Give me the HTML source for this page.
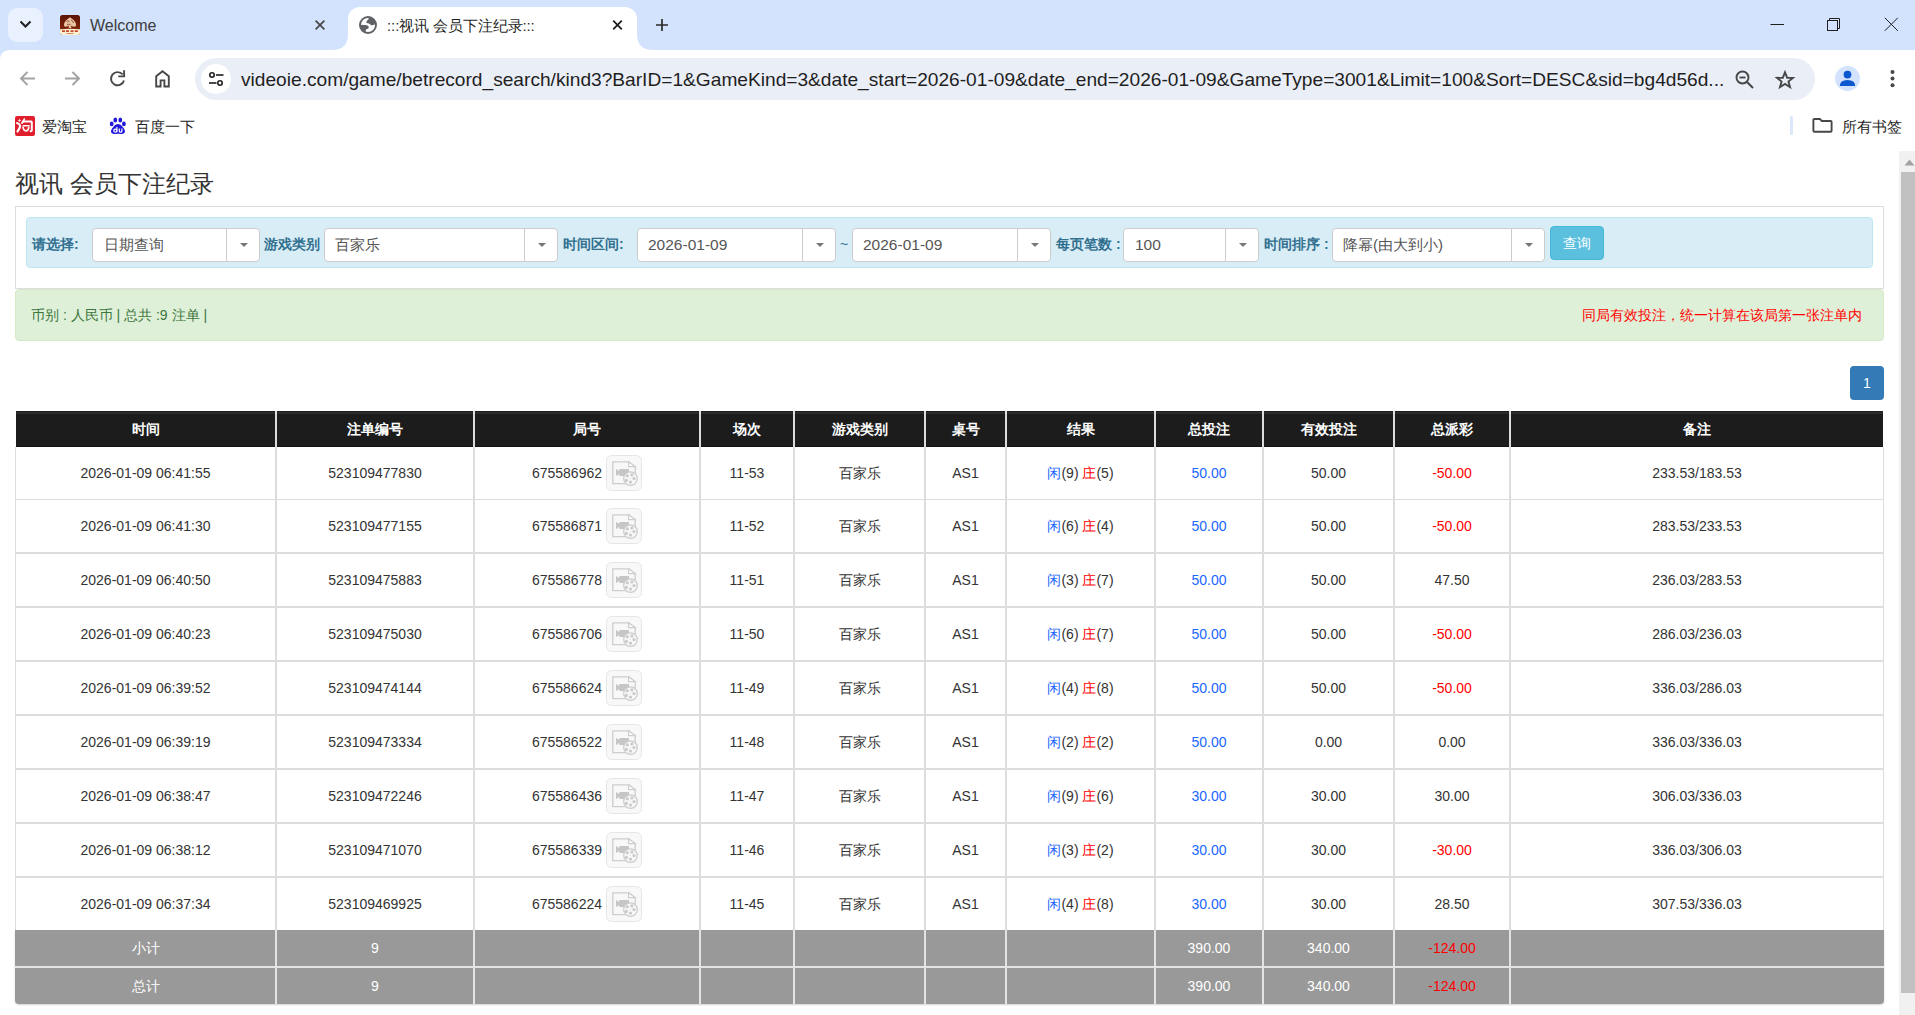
<!DOCTYPE html><html><head><meta charset="utf-8"><title>:::视讯 会员下注纪录:::</title><style>
html,body{margin:0;padding:0;}body{width:1915px;height:1015px;overflow:hidden;position:relative;background:#fff;font-family:"Liberation Sans",sans-serif;white-space:nowrap;}
div{box-sizing:border-box;}
</style></head><body>
<div style="position:absolute;left:0px;top:0px;width:1915px;height:50px;background:#d3e3fd"></div>
<div style="position:absolute;left:8px;top:8px;width:35px;height:34px;background:#e9f1fe;border-radius:9px"></div>
<svg style="position:absolute;left:19px;top:20px;" width="13" height="9" viewBox="0 0 13 9"><path d="M1.5 1.5 L6.5 6.5 L11.5 1.5" fill="none" stroke="#1f1f1f" stroke-width="2"/></svg>
<svg style="position:absolute;left:60px;top:15px;" width="20" height="20" viewBox="0 0 20 20"><defs><linearGradient id="fv" x1="0" y1="0" x2="0" y2="1"><stop offset="0" stop-color="#5a1304"/><stop offset="1" stop-color="#8e2c0e"/></linearGradient></defs><rect x="0" y="0" width="20" height="20" rx="2.5" fill="url(#fv)"/><path d="M0 14.2 Q10 13.2 20 14.2 V17.5 Q20 20 17.5 20 H2.5 Q0 20 0 17.5 Z" fill="#fbf0d2"/><path d="M10 2.2 Q15.2 5.5 16 9 Q16.5 12.3 13.2 11.5 Q11.8 11.1 10.9 10.4 L11.4 13 H8.6 L9.1 10.4 Q8.2 11.1 6.8 11.5 Q3.5 12.3 4 9 Q4.8 5.5 10 2.2 Z" fill="#e7c3a2"/><path d="M6.5 6.5 Q8 5 9.5 6.8 M7 9.5 Q9 8.6 10.5 9.8 M11 5 Q13 5.8 13.5 8" fill="none" stroke="#8a3516" stroke-width="0.8"/><path d="M2 16.2 H5 M6 16.2 H9 M10.5 16.2 H13.5 M14.8 16.2 H17.8" stroke="#c44a2a" stroke-width="1.7"/><path d="M6.5 18.5 H13.5" stroke="#d07a55" stroke-width="0.9"/></svg>
<div style="position:absolute;left:90px;top:15px;height:21px;line-height:21px;font-size:16px;color:#3c3c3c;font-weight:normal;white-space:nowrap;">Welcome</div>
<svg style="position:absolute;left:314px;top:19px;" width="12" height="12" viewBox="0 0 12 12"><path d="M1.6 1.6 L10.4 10.4 M10.4 1.6 L1.6 10.4" stroke="#474747" stroke-width="1.7"/></svg>
<div style="position:absolute;left:348px;top:7px;width:289px;height:44px;background:#fff;border-radius:12px 12px 0 0"></div>
<svg style="position:absolute;left:332px;top:34px;" width="16" height="16" viewBox="0 0 16 16"><path d="M0 16 L16 16 L16 0 Q16 16 0 16 Z" fill="#fff"/></svg>
<svg style="position:absolute;left:637px;top:34px;" width="16" height="16" viewBox="0 0 16 16"><path d="M0 0 Q0 16 16 16 L0 16 Z" fill="#fff"/></svg>
<svg style="position:absolute;left:354px;top:12px;" width="28" height="26" viewBox="0 0 28 26"><defs><clipPath id="gc"><circle cx="14" cy="13" r="8.5"/></clipPath></defs><circle cx="14" cy="13" r="8" fill="none" stroke="#5f6368" stroke-width="1.9"/><g clip-path="url(#gc)" fill="#5f6368"><path d="M15.3 3 Q15.2 7.6 13.2 8.6 Q12 9.8 12.6 10.9 Q15.4 11.2 16.4 12.4 Q17.6 14 20.4 12.6 L24 12 L24 2 Z"/><path d="M3 12.7 L11.2 12.9 Q14.8 13.2 14.8 15.4 Q14.7 17.1 12.2 17.3 Q11.3 18.6 11.8 23 L3 23 Z"/></g></svg>
<div style="position:absolute;left:387px;top:16px;height:19px;line-height:19px;font-size:15px;color:#1f1f1f;font-weight:normal;white-space:nowrap;letter-spacing:-0.1px">:::视讯 会员下注纪录:::</div>
<svg style="position:absolute;left:611px;top:19px;" width="13" height="12" viewBox="0 0 13 12"><path d="M2.2 1.7 L10.8 10.3 M10.8 1.7 L2.2 10.3" stroke="#1f1f1f" stroke-width="1.8"/></svg>
<svg style="position:absolute;left:655px;top:18px;" width="14" height="14" viewBox="0 0 14 14"><path d="M7 1 V13 M1 7 H13" stroke="#2b2b2b" stroke-width="1.7"/></svg>
<svg style="position:absolute;left:1770px;top:23px;" width="15" height="3" viewBox="0 0 15 3"><path d="M0.5 1.5 H14" stroke="#1f1f1f" stroke-width="1"/></svg>
<svg style="position:absolute;left:1826px;top:17px;" width="15" height="15" viewBox="0 0 15 15"><rect x="1.5" y="3.5" width="10" height="10" fill="none" stroke="#1f1f1f" stroke-width="1"/><path d="M3.5 3.5 V1.5 H13.5 V11.5 H11.5" fill="none" stroke="#1f1f1f" stroke-width="1"/></svg>
<svg style="position:absolute;left:1884px;top:17px;" width="15" height="15" viewBox="0 0 15 15"><path d="M0.8 0.8 L13.8 13.8 M13.8 0.8 L0.8 13.8" stroke="#1f1f1f" stroke-width="1"/></svg>
<div style="position:absolute;left:0px;top:50px;width:1915px;height:101px;background:#fff"></div>
<svg style="position:absolute;left:0px;top:50px;" width="10" height="10" viewBox="0 0 10 10"><path d="M0 0 H10 Q0 0 0 10 Z" fill="#d3e3fd"/></svg>
<svg style="position:absolute;left:19px;top:70px;" width="17" height="17" viewBox="0 0 17 17"><path d="M16 8.5 H2.5 M8.5 2 L2 8.5 L8.5 15" fill="none" stroke="#a3a3a3" stroke-width="1.9"/></svg>
<svg style="position:absolute;left:64px;top:70px;" width="17" height="17" viewBox="0 0 17 17"><path d="M1 8.5 H14.5 M8.5 2 L15 8.5 L8.5 15" fill="none" stroke="#a3a3a3" stroke-width="1.9"/></svg>
<svg style="position:absolute;left:108px;top:70px;" width="20" height="18" viewBox="0 0 20 18"><path d="M14.66 4.46 A6.6 6.6 0 1 0 15.97 10.4" fill="none" stroke="#474747" stroke-width="1.9"/><path d="M11.2 6.4 H16.1 V1.1" fill="none" stroke="#474747" stroke-width="1.9" stroke-linecap="square"/></svg>
<svg style="position:absolute;left:154px;top:69px;" width="18" height="20" viewBox="0 0 18 20"><path d="M2.2 17.5 V7.2 L8.5 2.3 L14.8 7.2 V17.5 H10.4 V11.4 H6.6 V17.5 Z" fill="none" stroke="#474747" stroke-width="1.9" stroke-linejoin="miter"/></svg>
<div style="position:absolute;left:195px;top:58px;width:1620px;height:42px;background:#eaeef7;border-radius:21px"></div>
<div style="position:absolute;left:201px;top:64px;width:30px;height:30px;border-radius:50%;background:#fff"></div>
<svg style="position:absolute;left:208px;top:72px;" width="18" height="14" viewBox="0 0 18 14"><circle cx="4" cy="3" r="2.2" fill="none" stroke="#1f1f1f" stroke-width="1.6"/><path d="M8 3 H15.5" stroke="#1f1f1f" stroke-width="1.6"/><circle cx="12" cy="11" r="2.2" fill="none" stroke="#1f1f1f" stroke-width="1.6"/><path d="M1 11 H8.5" stroke="#1f1f1f" stroke-width="1.6"/></svg>
<div style="position:absolute;left:241px;top:69px;height:22px;line-height:22px;font-size:19.15px;color:#1f1f1f;font-weight:normal;white-space:nowrap;">videoie.com/game/betrecord_search/kind3?BarID=1&amp;GameKind=3&amp;date_start=2026-01-09&amp;date_end=2026-01-09&amp;GameType=3001&amp;Limit=100&amp;Sort=DESC&amp;sid=bg4d56d...</div>
<svg style="position:absolute;left:1735px;top:70px;" width="20" height="20" viewBox="0 0 20 20"><circle cx="7.5" cy="7.5" r="6" fill="none" stroke="#474747" stroke-width="1.9"/><path d="M4.5 7.5 H10.5" stroke="#474747" stroke-width="1.9"/><path d="M12 12 L18 18" stroke="#474747" stroke-width="2"/></svg>
<svg style="position:absolute;left:1774px;top:69px;" width="22" height="21" viewBox="0 0 22 21"><g transform="translate(11 10.7) scale(0.9) translate(-11 -10.5)"><path d="M11 2.2 L13.4 8.3 L19.8 8.5 L14.8 12.5 L16.6 18.8 L11 15.1 L5.4 18.8 L7.2 12.5 L2.2 8.5 L8.6 8.3 Z" fill="none" stroke="#474747" stroke-width="2.1" stroke-linejoin="miter"/></g></svg>
<div style="position:absolute;left:1835px;top:66px;width:25px;height:25px;border-radius:50%;background:#d3e3fd"></div>
<svg style="position:absolute;left:1839px;top:70px;" width="17" height="17" viewBox="0 0 17 17"><circle cx="8.5" cy="4.6" r="3.9" fill="#0b57d0"/><path d="M0.8 16 Q0.8 10 8.5 10 Q16.2 10 16.2 16 Z" fill="#0b57d0"/></svg>
<svg style="position:absolute;left:1889px;top:69px;" width="7" height="20" viewBox="0 0 7 20"><circle cx="3.5" cy="3" r="2" fill="#474747"/><circle cx="3.5" cy="9.5" r="2" fill="#474747"/><circle cx="3.5" cy="16.2" r="2" fill="#474747"/></svg>
<svg style="position:absolute;left:15px;top:116px;" width="20" height="20" viewBox="0 0 20 20"><rect x="0" y="0" width="20" height="20" rx="2" fill="#df1f2b"/><g fill="none" stroke="#fff" stroke-linecap="round"><path d="M2 7 Q4.2 7.6 4.9 9.2" stroke-width="2"/><path d="M5.2 10 Q4.6 13 2.5 15.5" stroke-width="2.2"/><path d="M9.3 3.2 Q8.6 5.4 6.9 7" stroke-width="1.8"/><path d="M8 5.6 H16.3 Q16.8 5.6 16.8 6.3 V14.2 Q16.8 15.3 15.6 15.3" stroke-width="2"/><path d="M8.3 9.8 H14" stroke-width="1.6"/><path d="M8 11.2 Q8.5 14.8 10.8 15 Q13.5 14.8 13.8 11.4" stroke-width="1.6"/></g><path d="M10.6 12.5 Q9.6 11.4 10 12.8 L10.8 13.8 L11.6 12.8 Q12 11.4 11 12.5 Z" fill="#df1f2b"/><path d="M4.5 2.6 L5 4 L6.4 4.5 L5 5 L4.5 6.4 L4 5 L2.6 4.5 L4 4 Z" fill="#fff"/></svg>
<div style="position:absolute;left:42px;top:118px;height:18px;line-height:18px;font-size:15px;color:#1f1f1f;font-weight:normal;white-space:nowrap;letter-spacing:0px">爱淘宝</div>
<svg style="position:absolute;left:104px;top:112px;" width="28" height="28" viewBox="0 0 28 28"><g fill="#2319dc"><ellipse cx="11.3" cy="8" rx="1.9" ry="2.5"/><ellipse cx="16.3" cy="8" rx="1.9" ry="2.5"/><ellipse cx="7.7" cy="11.9" rx="1.9" ry="2.3"/><ellipse cx="19.9" cy="11.9" rx="1.9" ry="2.3"/><path d="M14 12 Q17 12 19 15.2 Q21.6 18.3 20.8 20.6 Q19.8 22.4 17 22 Q14 21.6 11 22 Q8.2 22.4 7.2 20.6 Q6.4 18.3 9 15.2 Q11 12 14 12 Z"/></g><g fill="none" stroke="#fff" stroke-width="1.2"><circle cx="11.3" cy="18.6" r="1.5"/><path d="M12.9 15 V20.3"/><path d="M15.3 16.6 V18.9 Q15.3 20.2 16.6 20.2 Q17.9 20.2 17.9 18.9 V16.6"/></g></svg>
<div style="position:absolute;left:135px;top:118px;height:18px;line-height:18px;font-size:15px;color:#1f1f1f;font-weight:normal;white-space:nowrap;">百度一下</div>
<div style="position:absolute;left:1790px;top:116px;width:3px;height:19px;background:#dbe7fb;border-radius:1.5px"></div>
<svg style="position:absolute;left:1812px;top:117px;" width="22" height="17" viewBox="0 0 22 17"><path d="M1.4 2.9 Q1.4 1.95 2.4 1.95 H7.8 L9.8 4 H18.6 Q19.6 4 19.6 5 V13.8 Q19.6 14.75 18.6 14.75 H2.4 Q1.4 14.75 1.4 13.8 Z" fill="none" stroke="#474747" stroke-width="1.9"/></svg>
<div style="position:absolute;left:1842px;top:118px;height:18px;line-height:18px;font-size:15px;color:#1f1f1f;font-weight:normal;white-space:nowrap;">所有书签</div>
<div style="position:absolute;left:1899px;top:151px;width:16px;height:864px;background:#f1f1f1"></div>
<svg style="position:absolute;left:1904px;top:159px;" width="11" height="7" viewBox="0 0 11 7"><path d="M0.5 6.5 L5.5 0.5 L10.5 6.5 Z" fill="#a3a3a3"/></svg>
<div style="position:absolute;left:1901px;top:172px;width:14px;height:821px;background:#c1c1c1"></div>
<div style="position:absolute;left:15px;top:169px;height:30px;line-height:30px;font-size:24px;color:#333;font-weight:normal;white-space:nowrap;">视讯 会员下注纪录</div>
<div style="position:absolute;left:15px;top:206px;width:1869px;height:83px;border:1px solid #dddddd;background:#fff"></div>
<div style="position:absolute;left:26px;top:217px;width:1847px;height:51px;background:#d9edf7;border:1px solid #bce8f1;border-radius:4px"></div>
<div style="position:absolute;left:32px;top:235px;height:18px;line-height:18px;font-size:14px;color:#31708f;font-weight:bold;white-space:nowrap;">请选择:</div>
<div style="position:absolute;left:264px;top:235px;height:18px;line-height:18px;font-size:14px;color:#31708f;font-weight:bold;white-space:nowrap;">游戏类别</div>
<div style="position:absolute;left:563px;top:235px;height:18px;line-height:18px;font-size:14px;color:#31708f;font-weight:bold;white-space:nowrap;">时间区间:</div>
<div style="position:absolute;left:840px;top:235px;height:18px;line-height:18px;font-size:14px;color:#31708f;font-weight:normal;white-space:nowrap;">~</div>
<div style="position:absolute;left:1056px;top:235px;height:18px;line-height:18px;font-size:14px;color:#31708f;font-weight:bold;white-space:nowrap;">每页笔数 :</div>
<div style="position:absolute;left:1264px;top:235px;height:18px;line-height:18px;font-size:14px;color:#31708f;font-weight:bold;white-space:nowrap;">时间排序 :</div>
<div style="position:absolute;left:92px;top:228px;width:168px;height:34px;background:#fff;border:1px solid #cccccc;border-radius:4px"></div>
<div style="position:absolute;left:226px;top:229px;width:1px;height:32px;background:#cccccc"></div>
<svg style="position:absolute;left:239.5px;top:243px;" width="8" height="4" viewBox="0 0 8 4"><path d="M0 0 H8 L4 4 Z" fill="#777"/></svg>
<div style="position:absolute;left:104px;top:235px;height:20px;line-height:20px;font-size:15.5px;color:#555;font-weight:normal;white-space:nowrap;font-size:15px">日期查询</div>
<div style="position:absolute;left:324px;top:228px;width:234px;height:34px;background:#fff;border:1px solid #cccccc;border-radius:4px"></div>
<div style="position:absolute;left:524px;top:229px;width:1px;height:32px;background:#cccccc"></div>
<svg style="position:absolute;left:537.5px;top:243px;" width="8" height="4" viewBox="0 0 8 4"><path d="M0 0 H8 L4 4 Z" fill="#777"/></svg>
<div style="position:absolute;left:335px;top:235px;height:20px;line-height:20px;font-size:15.5px;color:#555;font-weight:normal;white-space:nowrap;font-size:15px">百家乐</div>
<div style="position:absolute;left:637px;top:228px;width:199px;height:34px;background:#fff;border:1px solid #cccccc;border-radius:4px"></div>
<div style="position:absolute;left:802px;top:229px;width:1px;height:32px;background:#cccccc"></div>
<svg style="position:absolute;left:815.5px;top:243px;" width="8" height="4" viewBox="0 0 8 4"><path d="M0 0 H8 L4 4 Z" fill="#777"/></svg>
<div style="position:absolute;left:648px;top:235px;height:20px;line-height:20px;font-size:15.5px;color:#555;font-weight:normal;white-space:nowrap;">2026-01-09</div>
<div style="position:absolute;left:852px;top:228px;width:199px;height:34px;background:#fff;border:1px solid #cccccc;border-radius:4px"></div>
<div style="position:absolute;left:1017px;top:229px;width:1px;height:32px;background:#cccccc"></div>
<svg style="position:absolute;left:1030.5px;top:243px;" width="8" height="4" viewBox="0 0 8 4"><path d="M0 0 H8 L4 4 Z" fill="#777"/></svg>
<div style="position:absolute;left:863px;top:235px;height:20px;line-height:20px;font-size:15.5px;color:#555;font-weight:normal;white-space:nowrap;">2026-01-09</div>
<div style="position:absolute;left:1123px;top:228px;width:136px;height:34px;background:#fff;border:1px solid #cccccc;border-radius:4px"></div>
<div style="position:absolute;left:1225px;top:229px;width:1px;height:32px;background:#cccccc"></div>
<svg style="position:absolute;left:1238.5px;top:243px;" width="8" height="4" viewBox="0 0 8 4"><path d="M0 0 H8 L4 4 Z" fill="#777"/></svg>
<div style="position:absolute;left:1135px;top:235px;height:20px;line-height:20px;font-size:15.5px;color:#555;font-weight:normal;white-space:nowrap;">100</div>
<div style="position:absolute;left:1332px;top:228px;width:213px;height:34px;background:#fff;border:1px solid #cccccc;border-radius:4px"></div>
<div style="position:absolute;left:1511px;top:229px;width:1px;height:32px;background:#cccccc"></div>
<svg style="position:absolute;left:1524.5px;top:243px;" width="8" height="4" viewBox="0 0 8 4"><path d="M0 0 H8 L4 4 Z" fill="#777"/></svg>
<div style="position:absolute;left:1343px;top:235px;height:20px;line-height:20px;font-size:15.5px;color:#555;font-weight:normal;white-space:nowrap;font-size:15px">降幂(由大到小)</div>
<div style="position:absolute;left:1550px;top:226px;width:54px;height:34px;background:#5bc0de;border:1px solid #46b8da;border-radius:4px"></div>
<div style="position:absolute;left:977px;top:233px;width:1200px;height:20px;line-height:20px;text-align:center;font-size:14px;color:#fff;font-weight:normal;">查询</div>
<div style="position:absolute;left:15px;top:289px;width:1869px;height:52px;background:#dff0d8;border:1px solid #d6e9c6;border-radius:4px"></div>
<div style="position:absolute;left:31px;top:305px;height:20px;line-height:20px;font-size:14px;color:#3c763d;font-weight:normal;white-space:nowrap;">币别 : 人民币 | 总共 :9 注单 |</div>
<div style="position:absolute;left:662px;top:305px;width:1200px;height:20px;line-height:20px;text-align:right;font-size:14px;color:#ff0000;font-weight:normal;">同局有效投注，统一计算在该局第一张注单内</div>
<div style="position:absolute;left:1850px;top:366px;width:34px;height:34px;background:#337ab7;border-radius:4px"></div>
<div style="position:absolute;left:1267px;top:373px;width:1200px;height:20px;line-height:20px;text-align:center;font-size:14px;color:#fff;font-weight:normal;">1</div>
<div style="position:absolute;left:16px;top:411px;width:1867px;height:36px;background:linear-gradient(#1e1e1e 0px,#1e1e1e 1px,#2b2b2b 1px,#2b2b2b 3px,#1c1c1c 3px,#1c1c1c 35px,#121212 35px)"></div>
<div style="position:absolute;left:-454.5px;top:419px;width:1200px;height:20px;line-height:20px;text-align:center;font-size:14px;color:#fff;font-weight:bold;">时间</div>
<div style="position:absolute;left:-225.0px;top:419px;width:1200px;height:20px;line-height:20px;text-align:center;font-size:14px;color:#fff;font-weight:bold;">注单编号</div>
<div style="position:absolute;left:-13.0px;top:419px;width:1200px;height:20px;line-height:20px;text-align:center;font-size:14px;color:#fff;font-weight:bold;">局号</div>
<div style="position:absolute;left:147.0px;top:419px;width:1200px;height:20px;line-height:20px;text-align:center;font-size:14px;color:#fff;font-weight:bold;">场次</div>
<div style="position:absolute;left:259.5px;top:419px;width:1200px;height:20px;line-height:20px;text-align:center;font-size:14px;color:#fff;font-weight:bold;">游戏类别</div>
<div style="position:absolute;left:365.5px;top:419px;width:1200px;height:20px;line-height:20px;text-align:center;font-size:14px;color:#fff;font-weight:bold;">桌号</div>
<div style="position:absolute;left:480.5px;top:419px;width:1200px;height:20px;line-height:20px;text-align:center;font-size:14px;color:#fff;font-weight:bold;">结果</div>
<div style="position:absolute;left:609.0px;top:419px;width:1200px;height:20px;line-height:20px;text-align:center;font-size:14px;color:#fff;font-weight:bold;">总投注</div>
<div style="position:absolute;left:728.5px;top:419px;width:1200px;height:20px;line-height:20px;text-align:center;font-size:14px;color:#fff;font-weight:bold;">有效投注</div>
<div style="position:absolute;left:852.0px;top:419px;width:1200px;height:20px;line-height:20px;text-align:center;font-size:14px;color:#fff;font-weight:bold;">总派彩</div>
<div style="position:absolute;left:1097.0px;top:419px;width:1200px;height:20px;line-height:20px;text-align:center;font-size:14px;color:#fff;font-weight:bold;">备注</div>
<div style="position:absolute;left:275px;top:411px;width:2px;height:36px;background:#dcdcdc"></div>
<div style="position:absolute;left:473px;top:411px;width:2px;height:36px;background:#dcdcdc"></div>
<div style="position:absolute;left:699px;top:411px;width:2px;height:36px;background:#dcdcdc"></div>
<div style="position:absolute;left:793px;top:411px;width:2px;height:36px;background:#dcdcdc"></div>
<div style="position:absolute;left:924px;top:411px;width:2px;height:36px;background:#dcdcdc"></div>
<div style="position:absolute;left:1005px;top:411px;width:2px;height:36px;background:#dcdcdc"></div>
<div style="position:absolute;left:1154px;top:411px;width:2px;height:36px;background:#dcdcdc"></div>
<div style="position:absolute;left:1262px;top:411px;width:2px;height:36px;background:#dcdcdc"></div>
<div style="position:absolute;left:1393px;top:411px;width:2px;height:36px;background:#dcdcdc"></div>
<div style="position:absolute;left:1509px;top:411px;width:2px;height:36px;background:#dcdcdc"></div>
<div style="position:absolute;left:15px;top:447px;width:1px;height:483px;background:#dddddd"></div>
<div style="position:absolute;left:1883px;top:447px;width:1px;height:483px;background:#dddddd"></div>
<div style="position:absolute;left:275px;top:447px;width:2px;height:483px;background:#dddddd"></div>
<div style="position:absolute;left:473px;top:447px;width:2px;height:483px;background:#dddddd"></div>
<div style="position:absolute;left:699px;top:447px;width:2px;height:483px;background:#dddddd"></div>
<div style="position:absolute;left:793px;top:447px;width:2px;height:483px;background:#dddddd"></div>
<div style="position:absolute;left:924px;top:447px;width:2px;height:483px;background:#dddddd"></div>
<div style="position:absolute;left:1005px;top:447px;width:2px;height:483px;background:#dddddd"></div>
<div style="position:absolute;left:1154px;top:447px;width:2px;height:483px;background:#dddddd"></div>
<div style="position:absolute;left:1262px;top:447px;width:2px;height:483px;background:#dddddd"></div>
<div style="position:absolute;left:1393px;top:447px;width:2px;height:483px;background:#dddddd"></div>
<div style="position:absolute;left:1509px;top:447px;width:2px;height:483px;background:#dddddd"></div>
<div style="position:absolute;left:15px;top:499px;width:1869px;height:1px;background:#dddddd"></div>
<div style="position:absolute;left:15px;top:552px;width:1869px;height:2px;background:#dddddd"></div>
<div style="position:absolute;left:15px;top:606px;width:1869px;height:2px;background:#dddddd"></div>
<div style="position:absolute;left:15px;top:660px;width:1869px;height:2px;background:#dddddd"></div>
<div style="position:absolute;left:15px;top:714px;width:1869px;height:2px;background:#dddddd"></div>
<div style="position:absolute;left:15px;top:768px;width:1869px;height:2px;background:#dddddd"></div>
<div style="position:absolute;left:15px;top:822px;width:1869px;height:2px;background:#dddddd"></div>
<div style="position:absolute;left:15px;top:876px;width:1869px;height:2px;background:#dddddd"></div>
<div style="position:absolute;left:-454.5px;top:463.0px;width:1200px;height:20px;line-height:20px;text-align:center;font-size:14px;color:#333;font-weight:normal;">2026-01-09 06:41:55</div>
<div style="position:absolute;left:-225.0px;top:463.0px;width:1200px;height:20px;line-height:20px;text-align:center;font-size:14px;color:#333;font-weight:normal;">523109477830</div>
<div style="position:absolute;left:-598px;top:463.0px;width:1200px;height:20px;line-height:20px;text-align:right;font-size:14px;color:#333;font-weight:normal;">675586962</div>
<svg style="position:absolute;left:606px;top:455px;" width="36" height="36" viewBox="0 0 36 36"><rect x="0.5" y="0.5" width="35" height="35" rx="5" fill="#f8f8f8" stroke="#e6e6e6"/><path d="M6.8 6.8 H22.6 L29.2 11.8 V28.6 H6.8 Z" fill="#f8f8f8" stroke="#cdcdcd" stroke-width="1.3"/><path d="M22.6 6.8 V11.6 H29.2 Z" fill="#fdfdfd" stroke="#cdcdcd" stroke-width="1.2"/><path d="M10 14 L13.3 16 V14 H23 V21 H13.3 V19 L10 21 Z" fill="#c6c6c6"/><circle cx="24.5" cy="23.6" r="6.8" fill="#f8f8f8" stroke="#cdcdcd" stroke-width="1.3"/><circle cx="21.3" cy="20.8" r="1.6" fill="#cacaca"/><circle cx="25.9" cy="19.9" r="1.6" fill="#cacaca"/><circle cx="28" cy="23.6" r="1.6" fill="#cacaca"/><circle cx="24.5" cy="27.1" r="1.6" fill="#cacaca"/><circle cx="20.4" cy="25.4" r="1.6" fill="#cacaca"/><circle cx="24.2" cy="23.4" r="0.5" fill="#d0d0d0"/></svg>
<div style="position:absolute;left:147.0px;top:463.0px;width:1200px;height:20px;line-height:20px;text-align:center;font-size:14px;color:#333;font-weight:normal;">11-53</div>
<div style="position:absolute;left:259.5px;top:463.0px;width:1200px;height:20px;line-height:20px;text-align:center;font-size:14px;color:#333;font-weight:normal;">百家乐</div>
<div style="position:absolute;left:365.5px;top:463.0px;width:1200px;height:20px;line-height:20px;text-align:center;font-size:14px;color:#333;font-weight:normal;">AS1</div>
<div style="position:absolute;left:480.5px;top:463.0px;width:1200px;height:20px;line-height:20px;text-align:center;font-size:14px;color:#333;font-weight:normal;"><span style="color:#1a66ff">闲</span>(9) <span style="color:#ff0000">庄</span>(5)</div>
<div style="position:absolute;left:609.0px;top:463.0px;width:1200px;height:20px;line-height:20px;text-align:center;font-size:14px;color:#1a66ff;font-weight:normal;">50.00</div>
<div style="position:absolute;left:728.5px;top:463.0px;width:1200px;height:20px;line-height:20px;text-align:center;font-size:14px;color:#333;font-weight:normal;">50.00</div>
<div style="position:absolute;left:852.0px;top:463.0px;width:1200px;height:20px;line-height:20px;text-align:center;font-size:14px;color:#ff0000;font-weight:normal;">-50.00</div>
<div style="position:absolute;left:1097.0px;top:463.0px;width:1200px;height:20px;line-height:20px;text-align:center;font-size:14px;color:#333;font-weight:normal;">233.53/183.53</div>
<div style="position:absolute;left:-454.5px;top:516.0px;width:1200px;height:20px;line-height:20px;text-align:center;font-size:14px;color:#333;font-weight:normal;">2026-01-09 06:41:30</div>
<div style="position:absolute;left:-225.0px;top:516.0px;width:1200px;height:20px;line-height:20px;text-align:center;font-size:14px;color:#333;font-weight:normal;">523109477155</div>
<div style="position:absolute;left:-598px;top:516.0px;width:1200px;height:20px;line-height:20px;text-align:right;font-size:14px;color:#333;font-weight:normal;">675586871</div>
<svg style="position:absolute;left:606px;top:508px;" width="36" height="36" viewBox="0 0 36 36"><rect x="0.5" y="0.5" width="35" height="35" rx="5" fill="#f8f8f8" stroke="#e6e6e6"/><path d="M6.8 6.8 H22.6 L29.2 11.8 V28.6 H6.8 Z" fill="#f8f8f8" stroke="#cdcdcd" stroke-width="1.3"/><path d="M22.6 6.8 V11.6 H29.2 Z" fill="#fdfdfd" stroke="#cdcdcd" stroke-width="1.2"/><path d="M10 14 L13.3 16 V14 H23 V21 H13.3 V19 L10 21 Z" fill="#c6c6c6"/><circle cx="24.5" cy="23.6" r="6.8" fill="#f8f8f8" stroke="#cdcdcd" stroke-width="1.3"/><circle cx="21.3" cy="20.8" r="1.6" fill="#cacaca"/><circle cx="25.9" cy="19.9" r="1.6" fill="#cacaca"/><circle cx="28" cy="23.6" r="1.6" fill="#cacaca"/><circle cx="24.5" cy="27.1" r="1.6" fill="#cacaca"/><circle cx="20.4" cy="25.4" r="1.6" fill="#cacaca"/><circle cx="24.2" cy="23.4" r="0.5" fill="#d0d0d0"/></svg>
<div style="position:absolute;left:147.0px;top:516.0px;width:1200px;height:20px;line-height:20px;text-align:center;font-size:14px;color:#333;font-weight:normal;">11-52</div>
<div style="position:absolute;left:259.5px;top:516.0px;width:1200px;height:20px;line-height:20px;text-align:center;font-size:14px;color:#333;font-weight:normal;">百家乐</div>
<div style="position:absolute;left:365.5px;top:516.0px;width:1200px;height:20px;line-height:20px;text-align:center;font-size:14px;color:#333;font-weight:normal;">AS1</div>
<div style="position:absolute;left:480.5px;top:516.0px;width:1200px;height:20px;line-height:20px;text-align:center;font-size:14px;color:#333;font-weight:normal;"><span style="color:#1a66ff">闲</span>(6) <span style="color:#ff0000">庄</span>(4)</div>
<div style="position:absolute;left:609.0px;top:516.0px;width:1200px;height:20px;line-height:20px;text-align:center;font-size:14px;color:#1a66ff;font-weight:normal;">50.00</div>
<div style="position:absolute;left:728.5px;top:516.0px;width:1200px;height:20px;line-height:20px;text-align:center;font-size:14px;color:#333;font-weight:normal;">50.00</div>
<div style="position:absolute;left:852.0px;top:516.0px;width:1200px;height:20px;line-height:20px;text-align:center;font-size:14px;color:#ff0000;font-weight:normal;">-50.00</div>
<div style="position:absolute;left:1097.0px;top:516.0px;width:1200px;height:20px;line-height:20px;text-align:center;font-size:14px;color:#333;font-weight:normal;">283.53/233.53</div>
<div style="position:absolute;left:-454.5px;top:570.0px;width:1200px;height:20px;line-height:20px;text-align:center;font-size:14px;color:#333;font-weight:normal;">2026-01-09 06:40:50</div>
<div style="position:absolute;left:-225.0px;top:570.0px;width:1200px;height:20px;line-height:20px;text-align:center;font-size:14px;color:#333;font-weight:normal;">523109475883</div>
<div style="position:absolute;left:-598px;top:570.0px;width:1200px;height:20px;line-height:20px;text-align:right;font-size:14px;color:#333;font-weight:normal;">675586778</div>
<svg style="position:absolute;left:606px;top:562px;" width="36" height="36" viewBox="0 0 36 36"><rect x="0.5" y="0.5" width="35" height="35" rx="5" fill="#f8f8f8" stroke="#e6e6e6"/><path d="M6.8 6.8 H22.6 L29.2 11.8 V28.6 H6.8 Z" fill="#f8f8f8" stroke="#cdcdcd" stroke-width="1.3"/><path d="M22.6 6.8 V11.6 H29.2 Z" fill="#fdfdfd" stroke="#cdcdcd" stroke-width="1.2"/><path d="M10 14 L13.3 16 V14 H23 V21 H13.3 V19 L10 21 Z" fill="#c6c6c6"/><circle cx="24.5" cy="23.6" r="6.8" fill="#f8f8f8" stroke="#cdcdcd" stroke-width="1.3"/><circle cx="21.3" cy="20.8" r="1.6" fill="#cacaca"/><circle cx="25.9" cy="19.9" r="1.6" fill="#cacaca"/><circle cx="28" cy="23.6" r="1.6" fill="#cacaca"/><circle cx="24.5" cy="27.1" r="1.6" fill="#cacaca"/><circle cx="20.4" cy="25.4" r="1.6" fill="#cacaca"/><circle cx="24.2" cy="23.4" r="0.5" fill="#d0d0d0"/></svg>
<div style="position:absolute;left:147.0px;top:570.0px;width:1200px;height:20px;line-height:20px;text-align:center;font-size:14px;color:#333;font-weight:normal;">11-51</div>
<div style="position:absolute;left:259.5px;top:570.0px;width:1200px;height:20px;line-height:20px;text-align:center;font-size:14px;color:#333;font-weight:normal;">百家乐</div>
<div style="position:absolute;left:365.5px;top:570.0px;width:1200px;height:20px;line-height:20px;text-align:center;font-size:14px;color:#333;font-weight:normal;">AS1</div>
<div style="position:absolute;left:480.5px;top:570.0px;width:1200px;height:20px;line-height:20px;text-align:center;font-size:14px;color:#333;font-weight:normal;"><span style="color:#1a66ff">闲</span>(3) <span style="color:#ff0000">庄</span>(7)</div>
<div style="position:absolute;left:609.0px;top:570.0px;width:1200px;height:20px;line-height:20px;text-align:center;font-size:14px;color:#1a66ff;font-weight:normal;">50.00</div>
<div style="position:absolute;left:728.5px;top:570.0px;width:1200px;height:20px;line-height:20px;text-align:center;font-size:14px;color:#333;font-weight:normal;">50.00</div>
<div style="position:absolute;left:852.0px;top:570.0px;width:1200px;height:20px;line-height:20px;text-align:center;font-size:14px;color:#333;font-weight:normal;">47.50</div>
<div style="position:absolute;left:1097.0px;top:570.0px;width:1200px;height:20px;line-height:20px;text-align:center;font-size:14px;color:#333;font-weight:normal;">236.03/283.53</div>
<div style="position:absolute;left:-454.5px;top:624.0px;width:1200px;height:20px;line-height:20px;text-align:center;font-size:14px;color:#333;font-weight:normal;">2026-01-09 06:40:23</div>
<div style="position:absolute;left:-225.0px;top:624.0px;width:1200px;height:20px;line-height:20px;text-align:center;font-size:14px;color:#333;font-weight:normal;">523109475030</div>
<div style="position:absolute;left:-598px;top:624.0px;width:1200px;height:20px;line-height:20px;text-align:right;font-size:14px;color:#333;font-weight:normal;">675586706</div>
<svg style="position:absolute;left:606px;top:616px;" width="36" height="36" viewBox="0 0 36 36"><rect x="0.5" y="0.5" width="35" height="35" rx="5" fill="#f8f8f8" stroke="#e6e6e6"/><path d="M6.8 6.8 H22.6 L29.2 11.8 V28.6 H6.8 Z" fill="#f8f8f8" stroke="#cdcdcd" stroke-width="1.3"/><path d="M22.6 6.8 V11.6 H29.2 Z" fill="#fdfdfd" stroke="#cdcdcd" stroke-width="1.2"/><path d="M10 14 L13.3 16 V14 H23 V21 H13.3 V19 L10 21 Z" fill="#c6c6c6"/><circle cx="24.5" cy="23.6" r="6.8" fill="#f8f8f8" stroke="#cdcdcd" stroke-width="1.3"/><circle cx="21.3" cy="20.8" r="1.6" fill="#cacaca"/><circle cx="25.9" cy="19.9" r="1.6" fill="#cacaca"/><circle cx="28" cy="23.6" r="1.6" fill="#cacaca"/><circle cx="24.5" cy="27.1" r="1.6" fill="#cacaca"/><circle cx="20.4" cy="25.4" r="1.6" fill="#cacaca"/><circle cx="24.2" cy="23.4" r="0.5" fill="#d0d0d0"/></svg>
<div style="position:absolute;left:147.0px;top:624.0px;width:1200px;height:20px;line-height:20px;text-align:center;font-size:14px;color:#333;font-weight:normal;">11-50</div>
<div style="position:absolute;left:259.5px;top:624.0px;width:1200px;height:20px;line-height:20px;text-align:center;font-size:14px;color:#333;font-weight:normal;">百家乐</div>
<div style="position:absolute;left:365.5px;top:624.0px;width:1200px;height:20px;line-height:20px;text-align:center;font-size:14px;color:#333;font-weight:normal;">AS1</div>
<div style="position:absolute;left:480.5px;top:624.0px;width:1200px;height:20px;line-height:20px;text-align:center;font-size:14px;color:#333;font-weight:normal;"><span style="color:#1a66ff">闲</span>(6) <span style="color:#ff0000">庄</span>(7)</div>
<div style="position:absolute;left:609.0px;top:624.0px;width:1200px;height:20px;line-height:20px;text-align:center;font-size:14px;color:#1a66ff;font-weight:normal;">50.00</div>
<div style="position:absolute;left:728.5px;top:624.0px;width:1200px;height:20px;line-height:20px;text-align:center;font-size:14px;color:#333;font-weight:normal;">50.00</div>
<div style="position:absolute;left:852.0px;top:624.0px;width:1200px;height:20px;line-height:20px;text-align:center;font-size:14px;color:#ff0000;font-weight:normal;">-50.00</div>
<div style="position:absolute;left:1097.0px;top:624.0px;width:1200px;height:20px;line-height:20px;text-align:center;font-size:14px;color:#333;font-weight:normal;">286.03/236.03</div>
<div style="position:absolute;left:-454.5px;top:678.0px;width:1200px;height:20px;line-height:20px;text-align:center;font-size:14px;color:#333;font-weight:normal;">2026-01-09 06:39:52</div>
<div style="position:absolute;left:-225.0px;top:678.0px;width:1200px;height:20px;line-height:20px;text-align:center;font-size:14px;color:#333;font-weight:normal;">523109474144</div>
<div style="position:absolute;left:-598px;top:678.0px;width:1200px;height:20px;line-height:20px;text-align:right;font-size:14px;color:#333;font-weight:normal;">675586624</div>
<svg style="position:absolute;left:606px;top:670px;" width="36" height="36" viewBox="0 0 36 36"><rect x="0.5" y="0.5" width="35" height="35" rx="5" fill="#f8f8f8" stroke="#e6e6e6"/><path d="M6.8 6.8 H22.6 L29.2 11.8 V28.6 H6.8 Z" fill="#f8f8f8" stroke="#cdcdcd" stroke-width="1.3"/><path d="M22.6 6.8 V11.6 H29.2 Z" fill="#fdfdfd" stroke="#cdcdcd" stroke-width="1.2"/><path d="M10 14 L13.3 16 V14 H23 V21 H13.3 V19 L10 21 Z" fill="#c6c6c6"/><circle cx="24.5" cy="23.6" r="6.8" fill="#f8f8f8" stroke="#cdcdcd" stroke-width="1.3"/><circle cx="21.3" cy="20.8" r="1.6" fill="#cacaca"/><circle cx="25.9" cy="19.9" r="1.6" fill="#cacaca"/><circle cx="28" cy="23.6" r="1.6" fill="#cacaca"/><circle cx="24.5" cy="27.1" r="1.6" fill="#cacaca"/><circle cx="20.4" cy="25.4" r="1.6" fill="#cacaca"/><circle cx="24.2" cy="23.4" r="0.5" fill="#d0d0d0"/></svg>
<div style="position:absolute;left:147.0px;top:678.0px;width:1200px;height:20px;line-height:20px;text-align:center;font-size:14px;color:#333;font-weight:normal;">11-49</div>
<div style="position:absolute;left:259.5px;top:678.0px;width:1200px;height:20px;line-height:20px;text-align:center;font-size:14px;color:#333;font-weight:normal;">百家乐</div>
<div style="position:absolute;left:365.5px;top:678.0px;width:1200px;height:20px;line-height:20px;text-align:center;font-size:14px;color:#333;font-weight:normal;">AS1</div>
<div style="position:absolute;left:480.5px;top:678.0px;width:1200px;height:20px;line-height:20px;text-align:center;font-size:14px;color:#333;font-weight:normal;"><span style="color:#1a66ff">闲</span>(4) <span style="color:#ff0000">庄</span>(8)</div>
<div style="position:absolute;left:609.0px;top:678.0px;width:1200px;height:20px;line-height:20px;text-align:center;font-size:14px;color:#1a66ff;font-weight:normal;">50.00</div>
<div style="position:absolute;left:728.5px;top:678.0px;width:1200px;height:20px;line-height:20px;text-align:center;font-size:14px;color:#333;font-weight:normal;">50.00</div>
<div style="position:absolute;left:852.0px;top:678.0px;width:1200px;height:20px;line-height:20px;text-align:center;font-size:14px;color:#ff0000;font-weight:normal;">-50.00</div>
<div style="position:absolute;left:1097.0px;top:678.0px;width:1200px;height:20px;line-height:20px;text-align:center;font-size:14px;color:#333;font-weight:normal;">336.03/286.03</div>
<div style="position:absolute;left:-454.5px;top:732.0px;width:1200px;height:20px;line-height:20px;text-align:center;font-size:14px;color:#333;font-weight:normal;">2026-01-09 06:39:19</div>
<div style="position:absolute;left:-225.0px;top:732.0px;width:1200px;height:20px;line-height:20px;text-align:center;font-size:14px;color:#333;font-weight:normal;">523109473334</div>
<div style="position:absolute;left:-598px;top:732.0px;width:1200px;height:20px;line-height:20px;text-align:right;font-size:14px;color:#333;font-weight:normal;">675586522</div>
<svg style="position:absolute;left:606px;top:724px;" width="36" height="36" viewBox="0 0 36 36"><rect x="0.5" y="0.5" width="35" height="35" rx="5" fill="#f8f8f8" stroke="#e6e6e6"/><path d="M6.8 6.8 H22.6 L29.2 11.8 V28.6 H6.8 Z" fill="#f8f8f8" stroke="#cdcdcd" stroke-width="1.3"/><path d="M22.6 6.8 V11.6 H29.2 Z" fill="#fdfdfd" stroke="#cdcdcd" stroke-width="1.2"/><path d="M10 14 L13.3 16 V14 H23 V21 H13.3 V19 L10 21 Z" fill="#c6c6c6"/><circle cx="24.5" cy="23.6" r="6.8" fill="#f8f8f8" stroke="#cdcdcd" stroke-width="1.3"/><circle cx="21.3" cy="20.8" r="1.6" fill="#cacaca"/><circle cx="25.9" cy="19.9" r="1.6" fill="#cacaca"/><circle cx="28" cy="23.6" r="1.6" fill="#cacaca"/><circle cx="24.5" cy="27.1" r="1.6" fill="#cacaca"/><circle cx="20.4" cy="25.4" r="1.6" fill="#cacaca"/><circle cx="24.2" cy="23.4" r="0.5" fill="#d0d0d0"/></svg>
<div style="position:absolute;left:147.0px;top:732.0px;width:1200px;height:20px;line-height:20px;text-align:center;font-size:14px;color:#333;font-weight:normal;">11-48</div>
<div style="position:absolute;left:259.5px;top:732.0px;width:1200px;height:20px;line-height:20px;text-align:center;font-size:14px;color:#333;font-weight:normal;">百家乐</div>
<div style="position:absolute;left:365.5px;top:732.0px;width:1200px;height:20px;line-height:20px;text-align:center;font-size:14px;color:#333;font-weight:normal;">AS1</div>
<div style="position:absolute;left:480.5px;top:732.0px;width:1200px;height:20px;line-height:20px;text-align:center;font-size:14px;color:#333;font-weight:normal;"><span style="color:#1a66ff">闲</span>(2) <span style="color:#ff0000">庄</span>(2)</div>
<div style="position:absolute;left:609.0px;top:732.0px;width:1200px;height:20px;line-height:20px;text-align:center;font-size:14px;color:#1a66ff;font-weight:normal;">50.00</div>
<div style="position:absolute;left:728.5px;top:732.0px;width:1200px;height:20px;line-height:20px;text-align:center;font-size:14px;color:#333;font-weight:normal;">0.00</div>
<div style="position:absolute;left:852.0px;top:732.0px;width:1200px;height:20px;line-height:20px;text-align:center;font-size:14px;color:#333;font-weight:normal;">0.00</div>
<div style="position:absolute;left:1097.0px;top:732.0px;width:1200px;height:20px;line-height:20px;text-align:center;font-size:14px;color:#333;font-weight:normal;">336.03/336.03</div>
<div style="position:absolute;left:-454.5px;top:786.0px;width:1200px;height:20px;line-height:20px;text-align:center;font-size:14px;color:#333;font-weight:normal;">2026-01-09 06:38:47</div>
<div style="position:absolute;left:-225.0px;top:786.0px;width:1200px;height:20px;line-height:20px;text-align:center;font-size:14px;color:#333;font-weight:normal;">523109472246</div>
<div style="position:absolute;left:-598px;top:786.0px;width:1200px;height:20px;line-height:20px;text-align:right;font-size:14px;color:#333;font-weight:normal;">675586436</div>
<svg style="position:absolute;left:606px;top:778px;" width="36" height="36" viewBox="0 0 36 36"><rect x="0.5" y="0.5" width="35" height="35" rx="5" fill="#f8f8f8" stroke="#e6e6e6"/><path d="M6.8 6.8 H22.6 L29.2 11.8 V28.6 H6.8 Z" fill="#f8f8f8" stroke="#cdcdcd" stroke-width="1.3"/><path d="M22.6 6.8 V11.6 H29.2 Z" fill="#fdfdfd" stroke="#cdcdcd" stroke-width="1.2"/><path d="M10 14 L13.3 16 V14 H23 V21 H13.3 V19 L10 21 Z" fill="#c6c6c6"/><circle cx="24.5" cy="23.6" r="6.8" fill="#f8f8f8" stroke="#cdcdcd" stroke-width="1.3"/><circle cx="21.3" cy="20.8" r="1.6" fill="#cacaca"/><circle cx="25.9" cy="19.9" r="1.6" fill="#cacaca"/><circle cx="28" cy="23.6" r="1.6" fill="#cacaca"/><circle cx="24.5" cy="27.1" r="1.6" fill="#cacaca"/><circle cx="20.4" cy="25.4" r="1.6" fill="#cacaca"/><circle cx="24.2" cy="23.4" r="0.5" fill="#d0d0d0"/></svg>
<div style="position:absolute;left:147.0px;top:786.0px;width:1200px;height:20px;line-height:20px;text-align:center;font-size:14px;color:#333;font-weight:normal;">11-47</div>
<div style="position:absolute;left:259.5px;top:786.0px;width:1200px;height:20px;line-height:20px;text-align:center;font-size:14px;color:#333;font-weight:normal;">百家乐</div>
<div style="position:absolute;left:365.5px;top:786.0px;width:1200px;height:20px;line-height:20px;text-align:center;font-size:14px;color:#333;font-weight:normal;">AS1</div>
<div style="position:absolute;left:480.5px;top:786.0px;width:1200px;height:20px;line-height:20px;text-align:center;font-size:14px;color:#333;font-weight:normal;"><span style="color:#1a66ff">闲</span>(9) <span style="color:#ff0000">庄</span>(6)</div>
<div style="position:absolute;left:609.0px;top:786.0px;width:1200px;height:20px;line-height:20px;text-align:center;font-size:14px;color:#1a66ff;font-weight:normal;">30.00</div>
<div style="position:absolute;left:728.5px;top:786.0px;width:1200px;height:20px;line-height:20px;text-align:center;font-size:14px;color:#333;font-weight:normal;">30.00</div>
<div style="position:absolute;left:852.0px;top:786.0px;width:1200px;height:20px;line-height:20px;text-align:center;font-size:14px;color:#333;font-weight:normal;">30.00</div>
<div style="position:absolute;left:1097.0px;top:786.0px;width:1200px;height:20px;line-height:20px;text-align:center;font-size:14px;color:#333;font-weight:normal;">306.03/336.03</div>
<div style="position:absolute;left:-454.5px;top:840.0px;width:1200px;height:20px;line-height:20px;text-align:center;font-size:14px;color:#333;font-weight:normal;">2026-01-09 06:38:12</div>
<div style="position:absolute;left:-225.0px;top:840.0px;width:1200px;height:20px;line-height:20px;text-align:center;font-size:14px;color:#333;font-weight:normal;">523109471070</div>
<div style="position:absolute;left:-598px;top:840.0px;width:1200px;height:20px;line-height:20px;text-align:right;font-size:14px;color:#333;font-weight:normal;">675586339</div>
<svg style="position:absolute;left:606px;top:832px;" width="36" height="36" viewBox="0 0 36 36"><rect x="0.5" y="0.5" width="35" height="35" rx="5" fill="#f8f8f8" stroke="#e6e6e6"/><path d="M6.8 6.8 H22.6 L29.2 11.8 V28.6 H6.8 Z" fill="#f8f8f8" stroke="#cdcdcd" stroke-width="1.3"/><path d="M22.6 6.8 V11.6 H29.2 Z" fill="#fdfdfd" stroke="#cdcdcd" stroke-width="1.2"/><path d="M10 14 L13.3 16 V14 H23 V21 H13.3 V19 L10 21 Z" fill="#c6c6c6"/><circle cx="24.5" cy="23.6" r="6.8" fill="#f8f8f8" stroke="#cdcdcd" stroke-width="1.3"/><circle cx="21.3" cy="20.8" r="1.6" fill="#cacaca"/><circle cx="25.9" cy="19.9" r="1.6" fill="#cacaca"/><circle cx="28" cy="23.6" r="1.6" fill="#cacaca"/><circle cx="24.5" cy="27.1" r="1.6" fill="#cacaca"/><circle cx="20.4" cy="25.4" r="1.6" fill="#cacaca"/><circle cx="24.2" cy="23.4" r="0.5" fill="#d0d0d0"/></svg>
<div style="position:absolute;left:147.0px;top:840.0px;width:1200px;height:20px;line-height:20px;text-align:center;font-size:14px;color:#333;font-weight:normal;">11-46</div>
<div style="position:absolute;left:259.5px;top:840.0px;width:1200px;height:20px;line-height:20px;text-align:center;font-size:14px;color:#333;font-weight:normal;">百家乐</div>
<div style="position:absolute;left:365.5px;top:840.0px;width:1200px;height:20px;line-height:20px;text-align:center;font-size:14px;color:#333;font-weight:normal;">AS1</div>
<div style="position:absolute;left:480.5px;top:840.0px;width:1200px;height:20px;line-height:20px;text-align:center;font-size:14px;color:#333;font-weight:normal;"><span style="color:#1a66ff">闲</span>(3) <span style="color:#ff0000">庄</span>(2)</div>
<div style="position:absolute;left:609.0px;top:840.0px;width:1200px;height:20px;line-height:20px;text-align:center;font-size:14px;color:#1a66ff;font-weight:normal;">30.00</div>
<div style="position:absolute;left:728.5px;top:840.0px;width:1200px;height:20px;line-height:20px;text-align:center;font-size:14px;color:#333;font-weight:normal;">30.00</div>
<div style="position:absolute;left:852.0px;top:840.0px;width:1200px;height:20px;line-height:20px;text-align:center;font-size:14px;color:#ff0000;font-weight:normal;">-30.00</div>
<div style="position:absolute;left:1097.0px;top:840.0px;width:1200px;height:20px;line-height:20px;text-align:center;font-size:14px;color:#333;font-weight:normal;">336.03/306.03</div>
<div style="position:absolute;left:-454.5px;top:894.0px;width:1200px;height:20px;line-height:20px;text-align:center;font-size:14px;color:#333;font-weight:normal;">2026-01-09 06:37:34</div>
<div style="position:absolute;left:-225.0px;top:894.0px;width:1200px;height:20px;line-height:20px;text-align:center;font-size:14px;color:#333;font-weight:normal;">523109469925</div>
<div style="position:absolute;left:-598px;top:894.0px;width:1200px;height:20px;line-height:20px;text-align:right;font-size:14px;color:#333;font-weight:normal;">675586224</div>
<svg style="position:absolute;left:606px;top:886px;" width="36" height="36" viewBox="0 0 36 36"><rect x="0.5" y="0.5" width="35" height="35" rx="5" fill="#f8f8f8" stroke="#e6e6e6"/><path d="M6.8 6.8 H22.6 L29.2 11.8 V28.6 H6.8 Z" fill="#f8f8f8" stroke="#cdcdcd" stroke-width="1.3"/><path d="M22.6 6.8 V11.6 H29.2 Z" fill="#fdfdfd" stroke="#cdcdcd" stroke-width="1.2"/><path d="M10 14 L13.3 16 V14 H23 V21 H13.3 V19 L10 21 Z" fill="#c6c6c6"/><circle cx="24.5" cy="23.6" r="6.8" fill="#f8f8f8" stroke="#cdcdcd" stroke-width="1.3"/><circle cx="21.3" cy="20.8" r="1.6" fill="#cacaca"/><circle cx="25.9" cy="19.9" r="1.6" fill="#cacaca"/><circle cx="28" cy="23.6" r="1.6" fill="#cacaca"/><circle cx="24.5" cy="27.1" r="1.6" fill="#cacaca"/><circle cx="20.4" cy="25.4" r="1.6" fill="#cacaca"/><circle cx="24.2" cy="23.4" r="0.5" fill="#d0d0d0"/></svg>
<div style="position:absolute;left:147.0px;top:894.0px;width:1200px;height:20px;line-height:20px;text-align:center;font-size:14px;color:#333;font-weight:normal;">11-45</div>
<div style="position:absolute;left:259.5px;top:894.0px;width:1200px;height:20px;line-height:20px;text-align:center;font-size:14px;color:#333;font-weight:normal;">百家乐</div>
<div style="position:absolute;left:365.5px;top:894.0px;width:1200px;height:20px;line-height:20px;text-align:center;font-size:14px;color:#333;font-weight:normal;">AS1</div>
<div style="position:absolute;left:480.5px;top:894.0px;width:1200px;height:20px;line-height:20px;text-align:center;font-size:14px;color:#333;font-weight:normal;"><span style="color:#1a66ff">闲</span>(4) <span style="color:#ff0000">庄</span>(8)</div>
<div style="position:absolute;left:609.0px;top:894.0px;width:1200px;height:20px;line-height:20px;text-align:center;font-size:14px;color:#1a66ff;font-weight:normal;">30.00</div>
<div style="position:absolute;left:728.5px;top:894.0px;width:1200px;height:20px;line-height:20px;text-align:center;font-size:14px;color:#333;font-weight:normal;">30.00</div>
<div style="position:absolute;left:852.0px;top:894.0px;width:1200px;height:20px;line-height:20px;text-align:center;font-size:14px;color:#333;font-weight:normal;">28.50</div>
<div style="position:absolute;left:1097.0px;top:894.0px;width:1200px;height:20px;line-height:20px;text-align:center;font-size:14px;color:#333;font-weight:normal;">307.53/336.03</div>
<div style="position:absolute;left:15px;top:930px;width:1869px;height:74px;background:#999;border-radius:0 0 4px 4px;box-shadow:0 1px 2px rgba(0,0,0,0.18)"></div>
<div style="position:absolute;left:15px;top:966px;width:1869px;height:2px;background:#e3e3e3"></div>
<div style="position:absolute;left:275px;top:930px;width:2px;height:74px;background:#e3e3e3"></div>
<div style="position:absolute;left:473px;top:930px;width:2px;height:74px;background:#e3e3e3"></div>
<div style="position:absolute;left:699px;top:930px;width:2px;height:74px;background:#e3e3e3"></div>
<div style="position:absolute;left:793px;top:930px;width:2px;height:74px;background:#e3e3e3"></div>
<div style="position:absolute;left:924px;top:930px;width:2px;height:74px;background:#e3e3e3"></div>
<div style="position:absolute;left:1005px;top:930px;width:2px;height:74px;background:#e3e3e3"></div>
<div style="position:absolute;left:1154px;top:930px;width:2px;height:74px;background:#e3e3e3"></div>
<div style="position:absolute;left:1262px;top:930px;width:2px;height:74px;background:#e3e3e3"></div>
<div style="position:absolute;left:1393px;top:930px;width:2px;height:74px;background:#e3e3e3"></div>
<div style="position:absolute;left:1509px;top:930px;width:2px;height:74px;background:#e3e3e3"></div>
<div style="position:absolute;left:-454.5px;top:938px;width:1200px;height:20px;line-height:20px;text-align:center;font-size:14px;color:#fff;font-weight:normal;">小计</div>
<div style="position:absolute;left:-225.0px;top:938px;width:1200px;height:20px;line-height:20px;text-align:center;font-size:14px;color:#fff;font-weight:normal;">9</div>
<div style="position:absolute;left:609.0px;top:938px;width:1200px;height:20px;line-height:20px;text-align:center;font-size:14px;color:#fff;font-weight:normal;">390.00</div>
<div style="position:absolute;left:728.5px;top:938px;width:1200px;height:20px;line-height:20px;text-align:center;font-size:14px;color:#fff;font-weight:normal;">340.00</div>
<div style="position:absolute;left:852.0px;top:938px;width:1200px;height:20px;line-height:20px;text-align:center;font-size:14px;color:#ff0000;font-weight:normal;">-124.00</div>
<div style="position:absolute;left:-454.5px;top:976px;width:1200px;height:20px;line-height:20px;text-align:center;font-size:14px;color:#fff;font-weight:normal;">总计</div>
<div style="position:absolute;left:-225.0px;top:976px;width:1200px;height:20px;line-height:20px;text-align:center;font-size:14px;color:#fff;font-weight:normal;">9</div>
<div style="position:absolute;left:609.0px;top:976px;width:1200px;height:20px;line-height:20px;text-align:center;font-size:14px;color:#fff;font-weight:normal;">390.00</div>
<div style="position:absolute;left:728.5px;top:976px;width:1200px;height:20px;line-height:20px;text-align:center;font-size:14px;color:#fff;font-weight:normal;">340.00</div>
<div style="position:absolute;left:852.0px;top:976px;width:1200px;height:20px;line-height:20px;text-align:center;font-size:14px;color:#ff0000;font-weight:normal;">-124.00</div>
</body></html>
